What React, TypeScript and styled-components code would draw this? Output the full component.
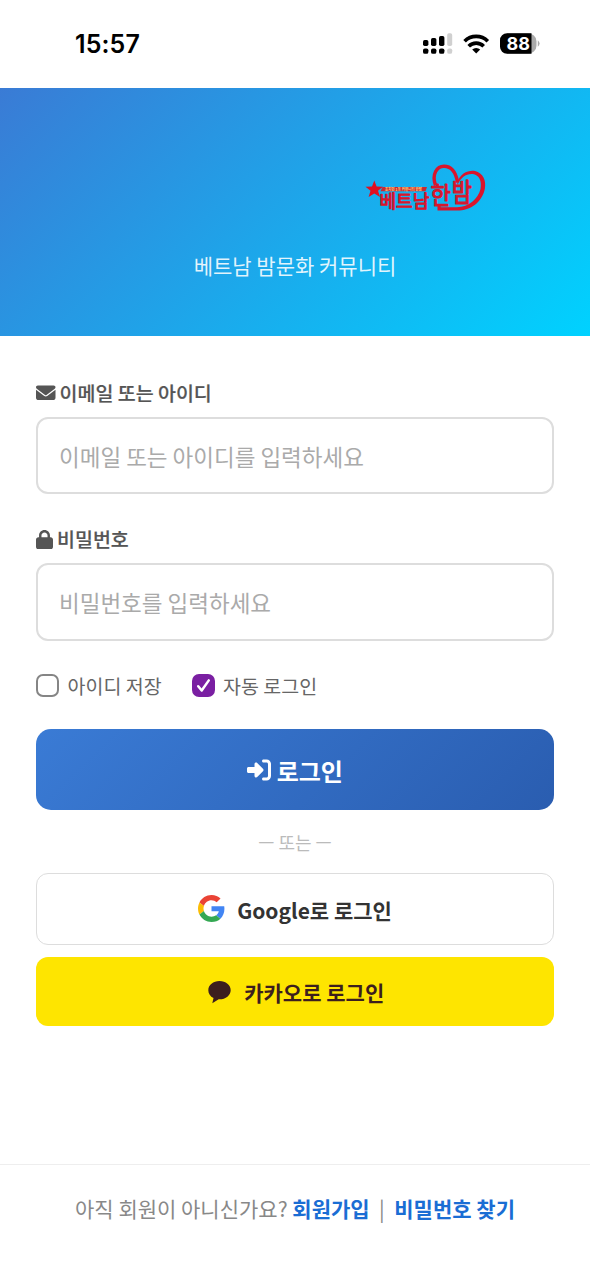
import React, { useState } from "react";
import styled, { createGlobalStyle } from "styled-components";

const Global = createGlobalStyle`
  * { box-sizing: border-box; }
  body {
    margin: 0;
    background: #fff;
    font-family: "Noto Sans CJK KR", "Noto Sans", sans-serif;
  }
`;

const Page = styled.div`
  width: 590px;
  height: 1278px;
  display: flex;
  flex-direction: column;
  background: #fff;
  overflow: hidden;
`;

const StatusBar = styled.div`
  height: 88px;
  flex: none;
  display: flex;
  align-items: center;
  justify-content: space-between;
  padding: 0 49px 0 75px;
`;

const Clock = styled.span`
  font: 600 25px/30px Inter, sans-serif;
  letter-spacing: 0.1px;
  color: #000;
`;

const StatusIcons = styled.svg`
  display: block;
`;

const Hero = styled.header`
  height: 248px;
  flex: none;
  display: flex;
  flex-direction: column;
  align-items: center;
  background: linear-gradient(135deg, #3a7bd5 0%, #00d2ff 100%);
`;

const Logo = styled.svg`
  display: block;
  margin: 72px 0 0 262px;
`;

const Tagline = styled.p`
  margin: 37px 0 0;
  font-size: 21px;
  line-height: 32px;
  color: rgba(255, 255, 255, 0.88);
`;

const Form = styled.form`
  display: flex;
  flex-direction: column;
  padding: 42px 36px 0;
`;

const Label = styled.label`
  display: flex;
  align-items: center;
  gap: 4px;
  height: 30px;
  margin-bottom: 9px;
  font-size: 19.5px;
  font-weight: 500;
  line-height: 30px;
  color: #555;
  -webkit-text-stroke: 0.2px #555;
`;

const Input = styled.input`
  height: 77.4px;
  margin-bottom: 30px;
  padding: 0 21px;
  border: 2px solid #ddd;
  border-radius: 12px;
  background: #fff;
  font: 22.5px "Noto Sans CJK KR", sans-serif;
  color: #333;
  outline: none;
  &::placeholder {
    color: #aaa;
    opacity: 1;
  }
`;

const Options = styled.div`
  display: flex;
  gap: 30px;
  height: 30px;
  margin-bottom: 28.200px;
`;

const Option = styled.label`
  display: flex;
  align-items: center;
  gap: 8.5px;
  font-size: 19.5px;
  line-height: 30px;
  color: #666;
  cursor: pointer;
`;

const HiddenCheck = styled.input`
  display: none;
`;

const Box = styled.span<{ $on: boolean }>`
  width: 23px;
  height: 23px;
  display: grid;
  place-items: center;
  border-radius: 7px;
  border: 2px solid ${(p) => (p.$on ? "#7a1fa2" : "#858585")};
  background: ${(p) => (p.$on ? "#7a1fa2" : "#fff")};
`;

const Button = styled.button<{ $kind: "primary" | "google" | "kakao" }>`
  display: flex;
  align-items: center;
  justify-content: center;
  width: 100%;
  padding: 0;
  font-family: inherit;
  cursor: pointer;
  ${(p) =>
    p.$kind === "primary" &&
    `height: 81px; gap: 5.5px; border: 0; border-radius: 15px; color: #fff;
     font-size: 24px; font-weight: 700; padding-top: 2px;
     background: linear-gradient(135deg, #3a7bd5, #2a5db0);`}
  ${(p) =>
    p.$kind === "google" &&
    `height: 71.5px; gap: 12px; border: 1.5px solid #ddd; border-radius: 12px; color: #333;
     font-size: 21px; font-weight: 700; background: #fff; margin-bottom: 12.5px; padding-top: 2px;`}
  ${(p) =>
    p.$kind === "kakao" &&
    `height: 68.5px; gap: 13.5px; border: 0; border-radius: 12px; color: #3c1e1e;
     font-size: 21px; font-weight: 700; background: #fee500; padding-left: 2px;`}
`;

const Divider = styled.div`
  height: 63.5px;
  text-align: center;
  font-size: 18px;
  line-height: 64px;
  color: #bbb;
`;

const Dash = styled.span`
  display: inline-block;
  line-height: 1;
  transform: translateY(-2px);
`;

const Footer = styled.footer`
  margin-top: auto;
  height: 114px;
  flex: none;
  display: flex;
  justify-content: center;
  padding-top: 27px;
  border-top: 1.5px solid #eee;
  font-size: 21px;
  line-height: 32px;
  color: #888;
  white-space: pre;
`;

const Link = styled.a`
  color: #1a6dd4;
  font-weight: 700;
  text-decoration: none;
`;

const Separator = styled.span`
  margin: 0 9.5px;
`;

function StatusGlyphs() {
  return (
    <StatusIcons width="119" height="24" viewBox="0 0 119 24">
      <g fill="#000">
        <rect x="1" y="8" width="5.4" height="6" rx="1.7" />
        <rect x="9" y="6" width="5.4" height="8" rx="1.7" />
        <rect x="17" y="4" width="5.4" height="10" rx="1.7" />
        <rect x="1" y="16.4" width="5.4" height="5.4" rx="1.9" />
        <rect x="9" y="16.4" width="5.4" height="5.4" rx="1.9" />
        <rect x="17" y="16.4" width="5.4" height="5.4" rx="1.9" />
      </g>
      <g fill="#d0d0d0">
        <rect x="25.2" y="1.3" width="5" height="12.7" rx="1.7" />
        <rect x="25.2" y="16.4" width="5" height="5.4" rx="1.9" />
      </g>
      <g fill="none" stroke="#000" strokeWidth="3.7">
        <path d="M42.6 9.2a16.6 16.6 0 0 1 23.2 0" />
        <path d="M46.7 14.2a10.7 10.7 0 0 1 15 0" />
      </g>
      <path d="M54.2 21.6l-4-4a5.8 5.8 0 0 1 8 0z" fill="#000" />
      <path d="M85 1.2h20.5a9 8 0 0 1 9 8v4.6a9 8 0 0 1-9 8H85z" fill="#aaa" />
      <path d="M85 1.2h24.5v20.6H85a7 7 0 0 1-7-7V8.2a7 7 0 0 1 7-7z" fill="#000" />
      <path d="M115.8 8.2q3.6 3.3 0 6.6z" fill="#aaa" />
      <text x="96.3" y="18" textAnchor="middle" fontFamily="Inter, sans-serif" fontSize="18" fontWeight="700" fill="#fff">
        88
      </text>
    </StatusIcons>
  );
}

function BrandLogo() {
  return (
    <Logo width="122" height="52" viewBox="0 0 122 52">
      <path
        d="M70.5 25.5C66.5 14 72 6.3 79 6.3C87 6.3 91 13 92.6 22.5"
        fill="none"
        stroke="#d9152c"
        strokeWidth="3.4"
      />
      <path
        d="M92.4 22.5C95 13.5 103 10 110 11C118 13 121.5 20 119.8 29C117 42 106 50.6 92 50.6H72.5V45.5H75.7V47.3H92C104 47 113 39 115.5 29C117 20.5 114 15.5 109 14.2C102 13 96 17 92.4 25Z"
        fill="#d9152c"
      />
      <path
        d="M9.3 20.6l2.3 6 6.4.1-5 4.1 2 6.3-5.700-3.700-5.700 3.700 1.900-6.300-5-4.100 6.500-.1z"
        fill="#e10f20"
      />
      <path d="M17.500 27H62L60.5 31.300H15.5z" fill="#c92a32" />
      <g fontFamily="'Noto Sans CJK KR', sans-serif" fill="#d9152c">
        <text x="20" y="30.700" fontSize="4" fontWeight="700" textLength="37" lengthAdjust="spacingAndGlyphs" fill="#ffd27a">
          호치민 1등 커뮤니티 한밤
        </text>
        <g stroke="#d9152c" strokeWidth="1" strokeLinejoin="round">
          <text transform="translate(14.500 48.400) scale(1.030 1.040)" fontSize="17.5">
            베트남
          </text>
          <text transform="translate(65.500 44.300) scale(1.030 1.120)" fontSize="21.5">
            한
          </text>
          <text transform="translate(86.800 42.300) scale(1.020 1.220)" fontSize="21.5">
            밤
          </text>
        </g>
      </g>
    </Logo>
  );
}

function EnvelopeIcon() {
  return (
    <svg width="19.5" height="19.5" viewBox="0 0 512 512" fill="currentColor">
      <path d="M48 64C21.5 64 0 85.5 0 112c0 15.1 7.1 29.3 19.2 38.4L236.8 313.6c11.4 8.5 27 8.5 38.4 0L492.8 150.4c12.1-9.1 19.2-23.3 19.2-38.4c0-26.5-21.5-48-48-48H48zM0 176V384c0 35.3 28.7 64 64 64H448c35.3 0 64-28.7 64-64V176L294.4 339.2c-22.8 17.1-54 17.1-76.8 0L0 176z" />
    </svg>
  );
}

function LockIcon() {
  return (
    <svg width="17" height="19.5" viewBox="0 0 448 512" fill="currentColor">
      <path d="M144 144v48H304V144c0-44.2-35.8-80-80-80s-80 35.8-80 80zM80 192V144C80 64.5 144.5 0 224 0s144 64.5 144 144v48h16c35.3 0 64 28.7 64 64V448c0 35.3-28.7 64-64 64H64c-35.3 0-64-28.7-64-64V256c0-35.3 28.7-64 64-64H80z" />
    </svg>
  );
}

function EnterIcon() {
  return (
    <svg width="24" height="24" viewBox="0 0 512 512" fill="currentColor">
      <path d="M217.9 105.9L340.7 228.7c7.2 7.2 11.3 17.1 11.3 27.3s-4.1 20.1-11.3 27.3L217.9 406.1c-6.4 6.4-15 9.9-24 9.9c-18.7 0-33.9-15.2-33.9-33.9l0-62.1L32 320c-17.7 0-32-14.3-32-32l0-64c0-17.7 14.3-32 32-32l128 0 0-62.1c0-18.7 15.2-33.9 33.9-33.9c9 0 17.6 3.6 24 9.900zM352 416l64 0c17.7 0 32-14.3 32-32l0-256c0-17.7-14.3-32-32-32l-64 0c-17.7 0-32-14.3-32-32s14.3-32 32-32l64 0c53 0 96 43 96 96l0 256c0 53-43 96-96 96l-64 0c-17.7 0-32-14.3-32-32s14.3-32 32-32z" />
    </svg>
  );
}

const GoogleSvg = styled.svg`
  margin-top: -4px;
`;

function GoogleMark() {
  return (
    <GoogleSvg width="27" height="27" viewBox="0 0 48 48">
      <path fill="#EA4335" d="M24 9.5c3.54 0 6.71 1.22 9.21 3.6l6.85-6.85C35.9 2.38 30.47 0 24 0 14.62 0 6.51 5.38 2.56 13.22l7.98 6.19C12.43 13.72 17.74 9.5 24 9.5z" />
      <path fill="#4285F4" d="M46.98 24.55c0-1.57-.15-3.09-.38-4.55H24v9.02h12.94c-.58 2.96-2.26 5.48-4.78 7.18l7.73 6c4.51-4.18 7.09-10.36 7.09-17.65z" />
      <path fill="#FBBC05" d="M10.53 28.59c-.48-1.45-.76-2.99-.76-4.59s.27-3.14.76-4.59l-7.98-6.19C.92 16.46 0 20.12 0 24c0 3.88.92 7.54 2.56 10.78l7.97-6.19z" />
      <path fill="#34A853" d="M24 48c6.48 0 11.93-2.13 15.89-5.81l-7.73-6c-2.15 1.45-4.92 2.3-8.16 2.3-6.26 0-11.57-4.22-13.47-9.91l-7.98 6.19C6.51 42.62 14.62 48 24 48z" />
    </GoogleSvg>
  );
}

function KakaoMark() {
  return (
    <svg width="23" height="24" viewBox="0.5 0 23 24">
      <path
        d="M12 1C5.7 1 .8 5 .8 10.2c0 3.4 2 6.2 5.2 7.8L4.8 23.3l6.4-4h.8c6.3 0 11.2-4 11.2-9.1S18.3 1 12 1z"
        fill="#3c1e1e"
      />
    </svg>
  );
}

function CheckOption({ text, initial }: { text: string; initial: boolean }) {
  const [on, setOn] = useState(initial);
  return (
    <Option>
      <HiddenCheck type="checkbox" checked={on} onChange={() => setOn(!on)} />
      <Box $on={on}>
        {on && (
          <svg width="19" height="19" viewBox="0 0 19 19">
            <path
              d="M4.2 10.3l3.5 4.2L14.8 4.4"
              fill="none"
              stroke="#fff"
              strokeWidth="2.5"
              strokeLinecap="round"
              strokeLinejoin="round"
            />
          </svg>
        )}
      </Box>
      {text}
    </Option>
  );
}

export default function App() {
  return (
    <Page>
      <Global />
      <StatusBar>
        <Clock>15:57</Clock>
        <StatusGlyphs />
      </StatusBar>
      <Hero>
        <BrandLogo />
        <Tagline>베트남 밤문화 커뮤니티</Tagline>
      </Hero>
      <Form onSubmit={(e) => e.preventDefault()}>
        <Label htmlFor="account">
          <EnvelopeIcon />
          이메일 또는 아이디
        </Label>
        <Input id="account" placeholder="이메일 또는 아이디를 입력하세요" />
        <Label htmlFor="password">
          <LockIcon />
          비밀번호
        </Label>
        <Input id="password" type="password" placeholder="비밀번호를 입력하세요" />
        <Options>
          <CheckOption text="아이디 저장" initial={false} />
          <CheckOption text="자동 로그인" initial />
        </Options>
        <Button type="submit" $kind="primary">
          <EnterIcon />
          로그인
        </Button>
        <Divider>
          <Dash>—</Dash> 또는 <Dash>—</Dash>
        </Divider>
        <Button type="button" $kind="google">
          <GoogleMark />
          Google로 로그인
        </Button>
        <Button type="button" $kind="kakao">
          <KakaoMark />
          카카오로 로그인
        </Button>
      </Form>
      <Footer>
        {"아직 회원이 아니신가요? "}
        <Link href="#join">회원가입</Link>
        <Separator>|</Separator>
        <Link href="#find">비밀번호 찾기</Link>
      </Footer>
    </Page>
  );
}
